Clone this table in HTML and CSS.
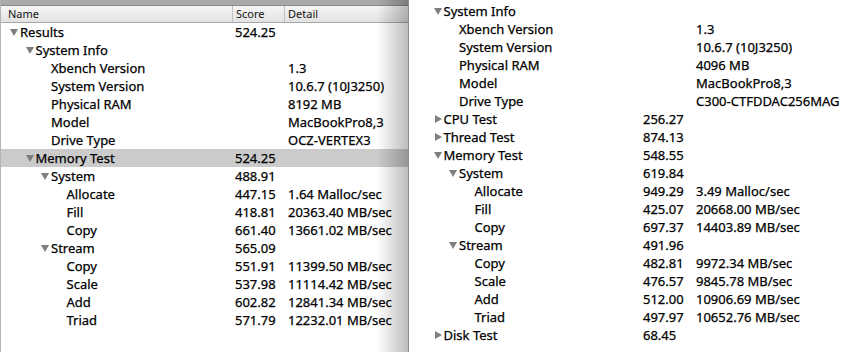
FILE: index.html
```html
<!DOCTYPE html>
<html lang="en">
<head>
  <meta charset="UTF-8">
  <title>Xbench Results</title>
  <link rel="stylesheet" href="styles.css">
</head>
<body>
  <div class="desktop">

    <!-- Left window: full results outline -->
    <div class="pane pane-left">
      <div class="titlebar"></div>
      <div class="header">
        <div class="hcell hname">Name</div>
        <div class="hcell hscore">Score</div>
        <div class="hcell hdetail">Detail</div>
      </div>
      <div class="rows">
        <div class="row l0"><span class="name"><i class="tri open"></i>Results</span><span class="score">524.25</span><span class="detail"></span></div>
        <div class="row l1"><span class="name"><i class="tri open"></i>System Info</span><span class="score"></span><span class="detail"></span></div>
        <div class="row l2"><span class="name"><i class="tri"></i>Xbench Version</span><span class="score"></span><span class="detail">1.3</span></div>
        <div class="row l2"><span class="name"><i class="tri"></i>System Version</span><span class="score"></span><span class="detail">10.6.7 (10J3250)</span></div>
        <div class="row l2"><span class="name"><i class="tri"></i>Physical RAM</span><span class="score"></span><span class="detail">8192 MB</span></div>
        <div class="row l2"><span class="name"><i class="tri"></i>Model</span><span class="score"></span><span class="detail">MacBookPro8,3</span></div>
        <div class="row l2"><span class="name"><i class="tri"></i>Drive Type</span><span class="score"></span><span class="detail">OCZ-VERTEX3</span></div>
        <div class="row l1 selected"><span class="name"><i class="tri open"></i>Memory Test</span><span class="score">524.25</span><span class="detail"></span></div>
        <div class="row l2"><span class="name"><i class="tri open"></i>System</span><span class="score">488.91</span><span class="detail"></span></div>
        <div class="row l3"><span class="name"><i class="tri"></i>Allocate</span><span class="score">447.15</span><span class="detail">1.64 Malloc/sec</span></div>
        <div class="row l3"><span class="name"><i class="tri"></i>Fill</span><span class="score">418.81</span><span class="detail">20363.40 MB/sec</span></div>
        <div class="row l3"><span class="name"><i class="tri"></i>Copy</span><span class="score">661.40</span><span class="detail">13661.02 MB/sec</span></div>
        <div class="row l2"><span class="name"><i class="tri open"></i>Stream</span><span class="score">565.09</span><span class="detail"></span></div>
        <div class="row l3"><span class="name"><i class="tri"></i>Copy</span><span class="score">551.91</span><span class="detail">11399.50 MB/sec</span></div>
        <div class="row l3"><span class="name"><i class="tri"></i>Scale</span><span class="score">537.98</span><span class="detail">11114.42 MB/sec</span></div>
        <div class="row l3"><span class="name"><i class="tri"></i>Add</span><span class="score">602.82</span><span class="detail">12841.34 MB/sec</span></div>
        <div class="row l3"><span class="name"><i class="tri"></i>Triad</span><span class="score">571.79</span><span class="detail">12232.01 MB/sec</span></div>
      </div>
    </div>

    <!-- Right window: second machine, scrolled -->
    <div class="pane pane-right">
      <div class="rows">
        <div class="row l1"><span class="name"><i class="tri open"></i>System Info</span><span class="score"></span><span class="detail"></span></div>
        <div class="row l2"><span class="name"><i class="tri"></i>Xbench Version</span><span class="score"></span><span class="detail">1.3</span></div>
        <div class="row l2"><span class="name"><i class="tri"></i>System Version</span><span class="score"></span><span class="detail">10.6.7 (10J3250)</span></div>
        <div class="row l2"><span class="name"><i class="tri"></i>Physical RAM</span><span class="score"></span><span class="detail">4096 MB</span></div>
        <div class="row l2"><span class="name"><i class="tri"></i>Model</span><span class="score"></span><span class="detail">MacBookPro8,3</span></div>
        <div class="row l2"><span class="name"><i class="tri"></i>Drive Type</span><span class="score"></span><span class="detail">C300-CTFDDAC256MAG</span></div>
        <div class="row l1"><span class="name"><i class="tri closed"></i>CPU Test</span><span class="score">256.27</span><span class="detail"></span></div>
        <div class="row l1"><span class="name"><i class="tri closed"></i>Thread Test</span><span class="score">874.13</span><span class="detail"></span></div>
        <div class="row l1"><span class="name"><i class="tri open"></i>Memory Test</span><span class="score">548.55</span><span class="detail"></span></div>
        <div class="row l2"><span class="name"><i class="tri open"></i>System</span><span class="score">619.84</span><span class="detail"></span></div>
        <div class="row l3"><span class="name"><i class="tri"></i>Allocate</span><span class="score">949.29</span><span class="detail">3.49 Malloc/sec</span></div>
        <div class="row l3"><span class="name"><i class="tri"></i>Fill</span><span class="score">425.07</span><span class="detail">20668.00 MB/sec</span></div>
        <div class="row l3"><span class="name"><i class="tri"></i>Copy</span><span class="score">697.37</span><span class="detail">14403.89 MB/sec</span></div>
        <div class="row l2"><span class="name"><i class="tri open"></i>Stream</span><span class="score">491.96</span><span class="detail"></span></div>
        <div class="row l3"><span class="name"><i class="tri"></i>Copy</span><span class="score">482.81</span><span class="detail">9972.34 MB/sec</span></div>
        <div class="row l3"><span class="name"><i class="tri"></i>Scale</span><span class="score">476.57</span><span class="detail">9845.78 MB/sec</span></div>
        <div class="row l3"><span class="name"><i class="tri"></i>Add</span><span class="score">512.00</span><span class="detail">10906.69 MB/sec</span></div>
        <div class="row l3"><span class="name"><i class="tri"></i>Triad</span><span class="score">497.97</span><span class="detail">10652.76 MB/sec</span></div>
        <div class="row l1"><span class="name"><i class="tri closed"></i>Disk Test</span><span class="score">68.45</span><span class="detail"></span></div>
      </div>
    </div>

  </div>
</body>
</html>
```

FILE: styles.css
```css
body {
  margin: 0;
  font-family: "Noto Sans", "DejaVu Sans", sans-serif;
  font-size: 13px;
  color: #000;
  background: #fff;
}
.desktop {
  display: flex;
  width: 865px;
  height: 352px;
  overflow: hidden;
}
.pane {
  height: 352px;
  overflow: hidden;
  background: #fff;
}
.pane-left {
  position: relative;
  width: 408px;
  border-left: 1px solid #b4b4b4;
}
/* shadow cast by the window on the right */
.pane-left::after {
  content: "";
  position: absolute;
  top: 0;
  right: 0;
  width: 32px;
  height: 100%;
  background: linear-gradient(to right, rgba(0,0,0,0), rgba(0,0,0,0.26));
  border-right: 1px solid #8c8c8c;
  box-sizing: border-box;
}
.pane-right {
  flex: 1;
  padding-top: 2px;
}
.titlebar {
  height: 5px;
  background: #a9a9a9;
  border-bottom: 1px solid #8a8a8a;
}
.header {
  display: flex;
  height: 16px;
  background: linear-gradient(#f6f6f6, #e2e2e2);
  border-bottom: 1px solid #a8a8a8;
  font-size: 11px;
  line-height: 16px;
  color: #111;
}
.hcell {
  padding-left: 3px;
  box-sizing: border-box;
}
.hname {
  width: 232px;
  padding-left: 7px;
  border-right: 1px solid #c2c2c2;
}
.hscore {
  width: 52px;
  border-right: 1px solid #c2c2c2;
}
.hdetail {
  flex: 1;
}
.row {
  display: flex;
  align-items: center;
  height: 18px;
  white-space: nowrap;
  -webkit-text-stroke: 0.25px #000;
}
.row.selected {
  background: #cbcbcb;
}
.name {
  display: flex;
  align-items: center;
  width: 234px;
  box-sizing: border-box;
}
.l0 .name { padding-left: 9px; }
.l1 .name { padding-left: 24.5px; }
.l2 .name { padding-left: 40px; }
.l3 .name { padding-left: 55.5px; }
.score {
  width: 53px;
}
.tri {
  display: inline-block;
  width: 10px;
  height: 7px;
  flex: none;
  position: relative;
}
.tri.open::before {
  content: "";
  position: absolute;
  left: 0;
  top: 0;
  border-left: 4px solid transparent;
  border-right: 4px solid transparent;
  border-top: 7px solid #7e7e7e;
}
.tri.closed::before {
  content: "";
  position: absolute;
  left: 1px;
  top: -1px;
  border-top: 4px solid transparent;
  border-bottom: 4px solid transparent;
  border-left: 7px solid #7e7e7e;
}
```
